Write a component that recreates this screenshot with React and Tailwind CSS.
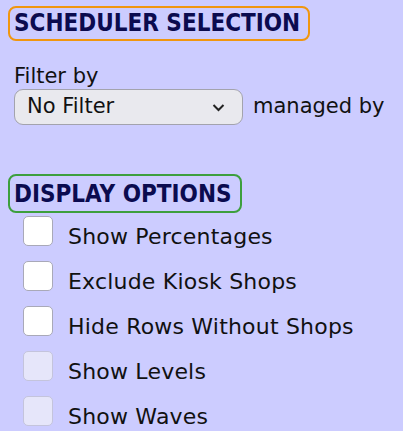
import { useState } from "react";

const OPTIONS = [
  { label: "Show Percentages", disabled: false },
  { label: "Exclude Kiosk Shops", disabled: false },
  { label: "Hide Rows Without Shops", disabled: false },
  { label: "Show Levels", disabled: true },
  { label: "Show Waves", disabled: true },
];

function SectionTitle({ children, color, pad }) {
  return (
    <div
      className={`inline-block rounded-lg border-2 pl-1 pr-2 text-[24px] font-bold leading-[31px] text-[#0b0b4f] ${color} ${pad}`}
      style={{ fontFamily: '"DejaVu Sans Condensed", "DejaVu Sans", sans-serif' }}
    >
      {children}
    </div>
  );
}

function Check({ label, disabled, checked, onToggle }) {
  return (
    <label className="flex h-[45px] items-start gap-[15px] pl-[15px]">
      <span
        onClick={disabled ? undefined : onToggle}
        className={`mt-[1px] h-[30px] w-[30px] shrink-0 rounded-[5px] border ${
          disabled ? "border-[#c4c4dc] bg-[#e6e6fa]" : "border-[#a9a9b8] bg-white"
        }`}
      >
        {checked && (
          <svg viewBox="0 0 24 24" className="h-full w-full" fill="none" stroke="#1a1a1a" strokeWidth="3">
            <path d="M5 12l5 5 9-10" />
          </svg>
        )}
      </span>
      <span className="mt-[9px] text-[22px] leading-[26px] tracking-[0.2px] text-[#111]">{label}</span>
    </label>
  );
}

export default function App() {
  const [checked, setChecked] = useState({});

  return (
    <div
      className="h-[431px] w-[403px] bg-[#ccccff] pl-[8px] pt-[6px]"
      style={{ fontFamily: '"DejaVu Sans", Verdana, sans-serif' }}
    >
      <SectionTitle color="border-[#f0960f]" pad="py-0">SCHEDULER SELECTION</SectionTitle>

      <div className="mt-[23px] pl-[6px] text-[21px] leading-[24px] text-[#111]">Filter by</div>
      <div className="mt-[1px] flex items-center gap-[10px] pl-[6px]">
        <div className="flex h-[36px] w-[229px] items-center justify-between rounded-[9px] border border-[#a3a3ad] bg-[#e9e9ee] pl-[12px] pr-[17px] text-[21px] text-[#111]">
          <span>No Filter</span>
          <svg width="13" height="9" viewBox="0 0 13 9" fill="none" stroke="#222" strokeWidth="2">
            <path d="M1.5 2l5 5 5-5" />
          </svg>
        </div>
        <span className="text-[21px] text-[#111]">managed by</span>
      </div>

      <div className="mt-[49px]">
        <SectionTitle color="border-[#3d9f3d]" pad="pt-[3px] pb-[1px]">DISPLAY OPTIONS</SectionTitle>
      </div>

      <div className="mt-[2px]">
        {OPTIONS.map((o, i) => (
          <Check
            key={o.label}
            label={o.label}
            disabled={o.disabled}
            checked={!!checked[i]}
            onToggle={() => setChecked((c) => ({ ...c, [i]: !c[i] }))}
          />
        ))}
      </div>
    </div>
  );
}
